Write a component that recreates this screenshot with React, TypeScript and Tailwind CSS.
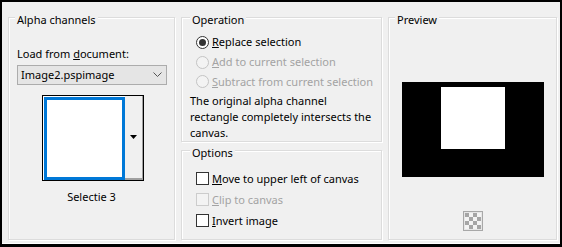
import React from "react";

function Group({
  title,
  titleMl,
  className,
  children,
}: {
  title: string;
  titleMl: string;
  className: string;
  children?: React.ReactNode;
}) {
  return (
    <div
      className={`flex flex-col border border-[#dcdcdc] shadow-[inset_1px_1px_0_#fff,1px_1px_0_#fff] ${className}`}
    >
      <div className={`-mt-[6px] ${titleMl} w-fit self-start bg-[#f0f0f0] px-[2px] leading-[16px] whitespace-nowrap`}>
        {title}
      </div>
      {children}
    </div>
  );
}

function Radio({ checked, disabled }: { checked?: boolean; disabled?: boolean }) {
  return (
    <span
      className={`flex h-[13px] w-[13px] shrink-0 items-center justify-center rounded-full border ${
        disabled ? "border-[#c4c4c4] bg-[#f3f3f3]" : "border-[#333333] bg-white"
      }`}
    >
      {checked && <span className="h-[7px] w-[7px] rounded-full bg-[#333333]" />}
    </span>
  );
}

function Check({ disabled }: { disabled?: boolean }) {
  return (
    <span
      className={`block h-[13px] w-[13px] shrink-0 border ${
        disabled ? "border-[#cccccc] bg-[#f3f3f3]" : "border-[#333333] bg-white"
      }`}
    />
  );
}

export default function App() {
  return (
    <div className="h-[247px] w-[562px] overflow-hidden border-2 border-b-[3px] border-black bg-[#f0f0f0] font-['Noto_Sans',sans-serif] text-[11px] text-black shadow-[inset_0_-1px_0_#fff]">
      <div className="flex gap-[6px] pl-[6px] pr-[3px] pt-[15px]">
        {/* Alpha channels */}
        <Group title="Alpha channels" titleMl="ml-[6px]" className="h-[223px] w-[167px]">
          <div className="ml-[8px] mt-[18px] whitespace-nowrap leading-[16px]">
            Load from <span className="underline">d</span>ocument:
          </div>
          <div className="ml-[8px] mt-[3px] flex h-[20px] w-[150px] items-center justify-between border border-[#acacac] bg-[#e5e5e5] pl-[3px] pr-[4px]">
            <span className="whitespace-nowrap leading-[16px]">Image2.pspimage</span>
            <svg width="9" height="6" viewBox="0 0 9 6">
              <polyline points="0.5,0.5 4.5,4.5 8.5,0.5" fill="none" stroke="#555" strokeWidth="1" />
            </svg>
          </div>
          <div className="ml-[33px] mt-[10px] flex h-[86px] w-[102px] border border-black">
            <div className="w-[82px] bg-white pl-[1px] pt-[1px]">
              <div className="h-full w-full border-[3px] border-[#0078d7] bg-white" />
            </div>
            <div className="flex flex-1 items-center justify-center border-b-2 border-r border-[#a0a0a0] bg-[#f0f0f0]">
              <svg width="7" height="4" viewBox="0 0 7 4">
                <polygon points="0,0 7,0 3.5,4" fill="#000" />
              </svg>
            </div>
          </div>
          <div className="mt-[8px] text-center leading-[16px]">Selectie 3</div>
        </Group>

        {/* Middle column */}
        <div className="flex w-[201px] flex-col gap-[8px]">
          <Group title="Operation" titleMl="ml-[8px]" className="h-[125px]">
            <div className="mt-[4px] flex flex-col whitespace-nowrap">
              <div className="ml-[14px] flex h-[20px] items-center gap-[3px]">
                <Radio checked />
                <span className="leading-[16px]">
                  <span className="underline">R</span>eplace selection
                </span>
              </div>
              <div className="ml-[14px] flex h-[20px] items-center gap-[3px] text-[#a3a3a3]">
                <Radio disabled />
                <span className="leading-[16px]">
                  <span className="underline">A</span>dd to current selection
                </span>
              </div>
              <div className="ml-[14px] flex h-[19px] items-center gap-[3px] text-[#a3a3a3]">
                <Radio disabled />
                <span className="leading-[16px]">
                  <span className="underline">S</span>ubtract from current selection
                </span>
              </div>
            </div>
            <div className="ml-[8px] mt-[2px] whitespace-nowrap leading-[16px]">
              The original alpha channel
              <br />
              rectangle completely intersects the
              <br />
              canvas.
            </div>
          </Group>
          <Group title="Options" titleMl="ml-[8px]" className="h-[90px]">
            <div className="mt-[7px] flex flex-col whitespace-nowrap">
              <div className="ml-[14px] flex h-[21px] items-center gap-[3px]">
                <Check />
                <span className="leading-[16px]">
                  <span className="underline">M</span>ove to upper left of canvas
                </span>
              </div>
              <div className="ml-[14px] flex h-[21px] items-center gap-[3px] text-[#a3a3a3]">
                <Check disabled />
                <span className="leading-[16px]">
                  <span className="underline">C</span>lip to canvas
                </span>
              </div>
              <div className="ml-[14px] flex h-[21px] items-center gap-[3px]">
                <Check />
                <span className="leading-[16px]">
                  <span className="underline">I</span>nvert image
                </span>
              </div>
            </div>
          </Group>
        </div>

        {/* Preview */}
        <Group title="Preview" titleMl="ml-[6px]" className="h-[223px] w-[169px] items-center">
          <div className="mt-[54px] h-[95px] w-[142px] bg-black pl-[39px] pt-[5px]">
            <div className="h-[62px] w-[64px] bg-white" />
          </div>
          <div className="mt-[34px] grid h-[20px] w-[20px] grid-cols-4 grid-rows-4 border border-[#a8a8a8] bg-[#e6e6e6] p-[1px]">
            {Array.from({ length: 16 }).map((_, i) => (
              <span
                key={i}
                className={(Math.floor(i / 4) + (i % 4)) % 2 === 0 ? "bg-[#a6a6a6]" : "bg-[#f4f4f4]"}
              />
            ))}
          </div>
        </Group>
      </div>
    </div>
  );
}
